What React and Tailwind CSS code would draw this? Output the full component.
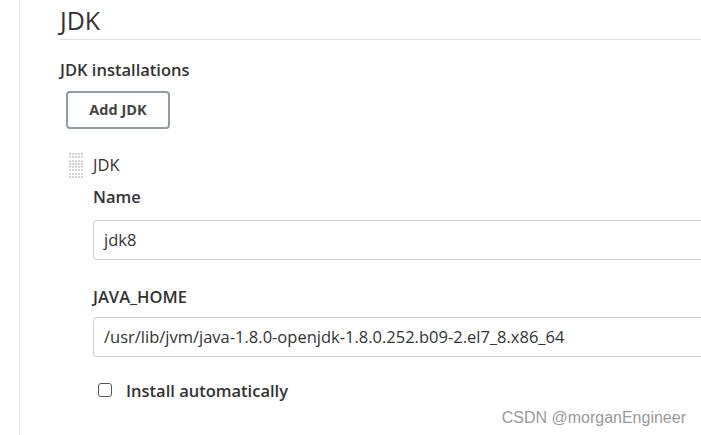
export default function App() {
  return (
    <div className="relative h-[435px] w-[701px] overflow-hidden bg-white font-['Open_Sans',sans-serif] text-[#333]">
      <div className="absolute left-[19px] top-0 h-full w-px bg-[#e6e6e6]" />
      <div className="pl-[60px]">
        <h1 className="pt-[5px] text-[25px] leading-[30px] text-[#333]">JDK</h1>
        <div className="mt-[4px] h-px bg-[#e0e0e0]" />
        <div className="mt-[19px] text-[16.5px] font-semibold leading-[22px]">JDK installations</div>
        <button className="ml-[6px] mt-[10px] h-[38px] w-[104px] rounded-[4px] border-2 border-[#8f9ba5] text-[14.5px] font-bold text-[#444]">
          Add JDK
        </button>
        <div className="mt-[24px] flex">
          <div className="ml-[9px] mt-0 grid h-[25px] w-[14px] grid-cols-5 gap-px">
            {Array.from({ length: 40 }).map((_, i) => (
              <span key={i} className="h-[2px] w-[2px] bg-[#d4d4d4]" />
            ))}
          </div>
          <div className="ml-[10px] flex-1">
            <div className="pt-[1px] text-[16.5px] leading-[22px] text-[#333]">JDK</div>
            <div className="mt-[10px] text-[16.5px] font-semibold leading-[22px]">Name</div>
            <div className="mt-[12px] flex h-[40px] items-center rounded-l-[4px] border border-r-0 border-[#cfcfcf] pl-[10px] text-[16.5px] text-[#333]">
              jdk8
            </div>
            <div className="mt-[26px] text-[16.5px] font-semibold leading-[22px]">JAVA_HOME</div>
            <div className="mt-[9px] flex h-[40px] items-center rounded-l-[4px] border border-r-0 border-[#cfcfcf] pl-[10px] text-[16.5px] text-[#333]">
              /usr/lib/jvm/java-1.8.0-openjdk-1.8.0.252.b09-2.el7_8.x86_64
            </div>
            <label className="mt-[23px] flex items-start">
              <span className="ml-[5px] mt-[3px] h-[14px] w-[14px] rounded-[3px] border-[1.5px] border-[#555]" />
              <span className="ml-[14px] text-[16.5px] font-semibold leading-[22px]">Install automatically</span>
            </label>
          </div>
        </div>
      </div>
      <div className="absolute right-[15px] top-[406px] text-[16px] text-[#999] font-['Liberation_Sans',sans-serif]">
        CSDN @morganEngineer
      </div>
    </div>
  );
}
